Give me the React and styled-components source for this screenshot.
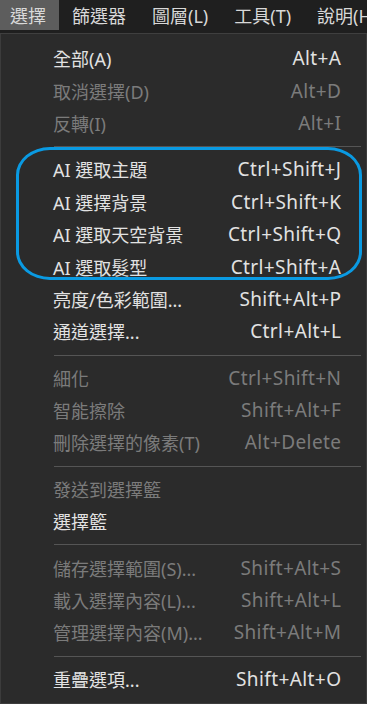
import React from 'react';
import styled, { createGlobalStyle } from 'styled-components';

const fontStack = '"Noto Sans", "Noto Sans CJK TC", sans-serif';

const GlobalStyle = createGlobalStyle`
  html, body {
    margin: 0;
    padding: 0;
    background: #2b2b2b;
  }
  body {
    font-family: ${fontStack};
  }
`;

const Screen = styled.div`
  width: 367px;
  height: 704px;
  display: flex;
  flex-direction: column;
  background: #2b2b2b;
  overflow: hidden;
`;

const MenuBar = styled.div`
  flex-shrink: 0;
  display: flex;
  height: 33px;
  background: #1f1f1f;
  border-bottom: 1px solid #3f3f3f;
  white-space: nowrap;
  overflow: hidden;
`;

const BarItem = styled.div`
  flex-shrink: 0;
  height: 30px;
  padding: 0 13px 0 10px;
  margin-right: 3px;
  display: flex;
  align-items: center;
  font-size: 18px;
  color: #d8d8d8;
  background: ${props => (props.active ? '#5d5d5d' : 'transparent')};
`;

const Panel = styled.div`
  position: relative;
  flex: 1;
  display: flex;
  flex-direction: column;
  padding: 8px 0 8px;
  border-left: 1px solid #3c3c3c;
  border-right: 1px solid #3c3c3c;
  border-bottom: 1px solid #3c3c3c;
`;

const Row = styled.div`
  flex-shrink: 0;
  height: 32.4px;
  display: flex;
  align-items: center;
  justify-content: space-between;
  padding: 0 25px 0 52px;
  font-size: 18px;
  color: ${props => (props.disabled ? '#7b7b7b' : '#e2e2e2')};
  white-space: nowrap;
`;

const Shortcut = styled.span`
  font-size: 19px;
  letter-spacing: 0.4px;
  margin-right: -0.4px;
`;

const Separator = styled.div`
  flex-shrink: 0;
  height: 14px;
  padding: 7px 5px 0 53px;
  box-sizing: border-box;

  &::after {
    content: '';
    display: block;
    height: 1px;
    background: #555555;
  }
`;

const Highlight = styled.div`
  position: absolute;
  left: 15px;
  top: 113px;
  width: 340px;
  height: 127px;
  border: 3px solid #0a9ae2;
  border-radius: 34px / 28px;
  pointer-events: none;
`;

const barItems = ['選擇', '篩選器', '圖層(L)', '工具(T)', '說明(H)'];

const menu = [
  { label: '全部(A)', key: 'Alt+A' },
  { label: '取消選擇(D)', key: 'Alt+D', disabled: true },
  { label: '反轉(I)', key: 'Alt+I', disabled: true },
  'sep',
  { label: 'AI 選取主題', key: 'Ctrl+Shift+J' },
  { label: 'AI 選擇背景', key: 'Ctrl+Shift+K' },
  { label: 'AI 選取天空背景', key: 'Ctrl+Shift+Q' },
  { label: 'AI 選取髮型', key: 'Ctrl+Shift+A' },
  { label: '亮度/色彩範圍...', key: 'Shift+Alt+P' },
  { label: '通道選擇...', key: 'Ctrl+Alt+L' },
  'sep',
  { label: '細化', key: 'Ctrl+Shift+N', disabled: true },
  { label: '智能擦除', key: 'Shift+Alt+F', disabled: true },
  { label: '刪除選擇的像素(T)', key: 'Alt+Delete', disabled: true },
  'sep',
  { label: '發送到選擇籃', disabled: true },
  { label: '選擇籃' },
  'sep',
  { label: '儲存選擇範圍(S)...', key: 'Shift+Alt+S', disabled: true },
  { label: '載入選擇內容(L)...', key: 'Shift+Alt+L', disabled: true },
  { label: '管理選擇內容(M)...', key: 'Shift+Alt+M', disabled: true },
  'sep',
  { label: '重疊選項...', key: 'Shift+Alt+O' },
];

const App = () => (
  <Screen>
    <GlobalStyle />
    <MenuBar>
      {barItems.map((item, i) => (
        <BarItem key={item} active={i === 0}>{item}</BarItem>
      ))}
    </MenuBar>
    <Panel>
      {menu.map((item, i) => {
        if (item === 'sep') return <Separator key={`sep-${i}`} />;
        return (
          <Row key={item.label} disabled={item.disabled}>
            <span>{item.label}</span>
            {item.key ? <Shortcut>{item.key}</Shortcut> : null}
          </Row>
        );
      })}
      <Highlight />
    </Panel>
  </Screen>
);

export default App;
